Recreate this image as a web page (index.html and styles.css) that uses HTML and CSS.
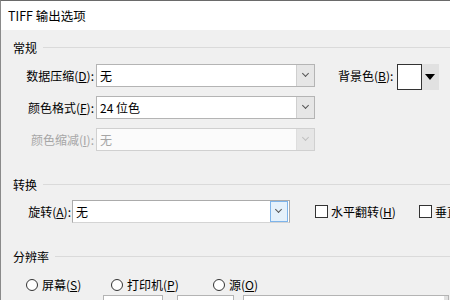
FILE: index.html
```html
<!DOCTYPE html>
<html>
<head>
    <meta charset="UTF-8">
    <title>TIFF 输出选项</title>
    <link rel="stylesheet" href="styles.css">
</head>
<body>
<div class="window">
    <div class="titlebar">TIFF 输出选项</div>
    <div class="dialog">
        <!-- 常规 -->
        <div class="group-title"><span>常规</span></div>
        <div class="rows">
            <div class="row">
                <label class="label">数据压缩(<u>D</u>):</label>
                <div class="combo"><span class="value">无</span><span class="drop"></span></div>
                <label class="bg-label">背景色(<u>B</u>):</label>
                <div class="swatch"></div>
                <div class="swatch-btn"></div>
            </div>
            <div class="row">
                <label class="label">颜色格式(<u>F</u>):</label>
                <div class="combo"><span class="value">24 位色</span><span class="drop"></span></div>
            </div>
            <div class="row disabled">
                <label class="label">颜色缩减(<u>I</u>):</label>
                <div class="combo"><span class="value">无</span><span class="drop"></span></div>
            </div>
        </div>

        <!-- 转换 -->
        <div class="group-title second"><span>转换</span></div>
        <div class="row rotate-row">
            <label class="label short">旋转(<u>A</u>):</label>
            <div class="combo rotate"><span class="value">无</span><span class="drop"></span></div>
            <label class="check first"><span class="box"></span>水平翻转(<u>H</u>)</label>
            <label class="check"><span class="box"></span>垂直翻转(<u>V</u>)</label>
        </div>

        <!-- 分辨率 -->
        <div class="group-title second"><span>分辨率</span></div>
        <div class="radios">
            <label class="radio"><span class="dot"></span>屏幕(<u>S</u>)</label>
            <label class="radio"><span class="dot"></span>打印机(<u>P</u>)</label>
            <label class="radio"><span class="dot"></span>源(<u>O</u>)</label>
        </div>
        <div class="fields">
            <div class="field f1"></div>
            <div class="field f2"></div>
            <div class="field f3"><span class="spin"></span></div>
        </div>
    </div>
</div>
</body>
</html>
```

FILE: styles.css
```css
html, body{
    margin: 0;
    height: 100%;
}

body{
    overflow: hidden;
    background: #f0f0f0;
    color: #000;
    font: 12px "Noto Sans CJK SC", "Microsoft YaHei", sans-serif;
}

u{
    text-decoration: underline;
    text-underline-offset: 1px;
}

.window{
    height: 100%;
    border-top: 1px solid #6a6a6a;
    border-left: 1px solid #8a8a8a;
    box-sizing: border-box;
}

.titlebar{
    height: 29px;
    line-height: 29px;
    padding-left: 7px;
    background: #fff;
    font-size: 12.5px;
}

.dialog{
    padding-top: 9px;
}

/* 分组标题 + 横线 */
.group-title{
    display: flex;
    align-items: center;
    height: 16px;
    padding-left: 12px;
}
.group-title:after{
    content: '';
    flex: 1;
    height: 1px;
    margin-left: 6px;
    background: #dadada;
}
.group-title.second{
    margin-top: 25px;
}

.rows{
    margin-top: 9px;
}
.row{
    display: flex;
    align-items: flex-start;
    height: 23px;
    margin-bottom: 9px;
}
.row > *{
    flex-shrink: 0;
}
.rows .row:last-child{
    margin-bottom: 0;
}

.label{
    width: 93px;
    margin-right: 2px;
    text-align: right;
    line-height: 23px;
    white-space: nowrap;
}
.label.short{
    width: 70px;
    margin-right: 1px;
}

.combo{
    display: flex;
    width: 219px;
    height: 23px;
    box-sizing: border-box;
    border: 1px solid #b4b4b4;
    background: #fff;
}
.combo .value{
    flex: 1;
    padding-left: 3px;
    line-height: 21px;
}
.combo .drop{
    width: 17px;
    background: #e6e6e6;
    border-left: 1px solid #cfcfcf;
    position: relative;
}
.combo .drop:after{
    content: '';
    position: absolute;
    left: 6px;
    top: 6px;
    width: 4px;
    height: 4px;
    border-right: 1px solid #555;
    border-bottom: 1px solid #555;
    transform: rotate(45deg);
}

.disabled .label{
    color: #a6a6a6;
}
.disabled .combo{
    border-color: #d0d0d0;
    background: #fbfbfb;
}
.disabled .combo .value{
    color: #a6a6a6;
}
.disabled .combo .drop{
    border-left-color: #dedede;
}
.disabled .combo .drop:after{
    border-color: #c0c0c0;
}

/* 背景色 */
.bg-label{
    margin-left: 23px;
    margin-right: 4px;
    line-height: 24px;
    white-space: nowrap;
}
.swatch{
    width: 25px;
    height: 26px;
    box-sizing: border-box;
    border: 1px solid #333;
    background: #fff;
}
.swatch-btn{
    width: 17px;
    height: 26px;
    background: #e1e1e1;
    position: relative;
}
.swatch-btn:after{
    content: '';
    position: absolute;
    left: 3px;
    top: 10px;
    border-left: 5px solid transparent;
    border-right: 5px solid transparent;
    border-top: 6px solid #000;
}

/* 旋转 */
.rotate-row{
    margin-top: 8px;
    margin-bottom: 0;
}
.combo.rotate{
    width: 218px;
    border-color: #ababab;
    border-bottom-color: #d4d4d4;
}
.combo.rotate .drop{
    width: 16px;
    margin: 0 1px 0 0;
    border: 1px solid #7eb4ea;
    background: #e5f1fb;
}
.combo.rotate .drop:after{
    left: 5px;
    top: 5px;
}

.check{
    display: flex;
    align-items: center;
    height: 23px;
    white-space: nowrap;
}
.check.first{
    width: 104px;
    margin-left: 25px;
}
.check .box{
    width: 13px;
    height: 13px;
    margin-right: 3px;
    box-sizing: border-box;
    border: 1px solid #333;
    background: #fff;
}

/* 分辨率 */
.radios{
    display: grid;
    grid-template-columns: 85px 102px auto;
    height: 14px;
    margin-top: 12px;
    padding-left: 25px;
}
.radio{
    display: flex;
    align-items: center;
    white-space: nowrap;
}
.radio .dot{
    width: 12px;
    height: 12px;
    margin-right: 4px;
    box-sizing: border-box;
    border: 1px solid #333;
    border-radius: 50%;
    background: #fff;
}

.fields{
    display: flex;
    margin-top: 5px;
    padding-left: 102px;
}
.field{
    flex-shrink: 0;
    height: 22px;
    box-sizing: border-box;
    border: 1px solid #b4b4b4;
    background: #fff;
}
.field.f1{
    width: 60px;
}
.field.f2{
    width: 57px;
    margin-left: 14px;
}
.field.f3{
    width: 206px;
    margin-left: 9px;
    display: flex;
    justify-content: flex-end;
}
.field .spin{
    width: 4px;
    background: #e1e1e1;
}
```
